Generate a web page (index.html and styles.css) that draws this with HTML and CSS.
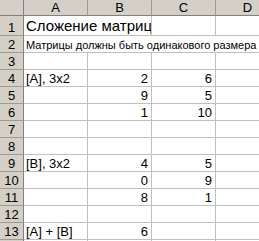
FILE: index.html
```html
<!DOCTYPE html>
<html lang="ru">
  <head>
    <meta charset="UTF-8" />
    <title>Сложение матриц</title>
    <link rel="stylesheet" href="styles.css">
  </head>
  <body>
    <div class="sheet">
      <!-- заголовки столбцов -->
      <div class="corner"></div>
      <div class="col-head">A</div>
      <div class="col-head">B</div>
      <div class="col-head">C</div>
      <div class="col-head">D</div>

      <div class="row-head">1</div>
      <div class="cell title span2">Сложение матриц</div>
      <div class="cell"></div>
      <div class="cell"></div>

      <div class="row-head">2</div>
      <div class="cell note span4">Матрицы должны быть одинакового размера</div>

      <div class="row-head">3</div>
      <div class="cell"></div><div class="cell"></div><div class="cell"></div><div class="cell"></div>

      <div class="row-head">4</div>
      <div class="cell">[A], 3x2</div><div class="cell num">2</div><div class="cell num">6</div><div class="cell"></div>

      <div class="row-head">5</div>
      <div class="cell"></div><div class="cell num">9</div><div class="cell num">5</div><div class="cell"></div>

      <div class="row-head">6</div>
      <div class="cell"></div><div class="cell num">1</div><div class="cell num">10</div><div class="cell"></div>

      <div class="row-head">7</div>
      <div class="cell"></div><div class="cell"></div><div class="cell"></div><div class="cell"></div>

      <div class="row-head">8</div>
      <div class="cell"></div><div class="cell"></div><div class="cell"></div><div class="cell"></div>

      <div class="row-head">9</div>
      <div class="cell">[B], 3x2</div><div class="cell num">4</div><div class="cell num">5</div><div class="cell"></div>

      <div class="row-head">10</div>
      <div class="cell"></div><div class="cell num">0</div><div class="cell num">9</div><div class="cell"></div>

      <div class="row-head">11</div>
      <div class="cell"></div><div class="cell num">8</div><div class="cell num">1</div><div class="cell"></div>

      <div class="row-head">12</div>
      <div class="cell"></div><div class="cell"></div><div class="cell"></div><div class="cell"></div>

      <div class="row-head">13</div>
      <div class="cell">[A] + [B]</div><div class="cell num">6</div><div class="cell"></div><div class="cell"></div>

      <!-- следующая строка видна только краем -->
      <div class="row-head"></div>
      <div class="cell"></div><div class="cell"></div><div class="cell"></div><div class="cell"></div>
    </div>
  </body>
</html>
```

FILE: styles.css
```css
body {
  margin: 0;
  background: #ffffff;
  font-family: "Liberation Sans", Arial, sans-serif;
}
.sheet {
  display: grid;
  grid-template-columns: 24px repeat(4, 64px);
  grid-template-rows: 16px 20px repeat(13, 17px);
  width: 259px;
  height: 241px;
  overflow: hidden;
}
.sheet > div {
  box-sizing: border-box;
  white-space: nowrap;
  overflow: hidden;
}
.corner,
.col-head,
.row-head {
  background: #d4d0c8;
  color: #000000;
  font-size: 13px;
  border-right: 1px solid #9c9a94;
  border-bottom: 1px solid #9c9a94;
}
.col-head {
  display: flex;
  align-items: center;
  justify-content: center;
  line-height: 15px;
  border-bottom-color: #808080;
}
.row-head {
  display: flex;
  align-items: flex-end;
  justify-content: center;
  line-height: 15px;
  border-right-color: #808080;
}
.corner {
  border-right-color: #808080;
  border-bottom-color: #808080;
}
.cell {
  display: flex;
  align-items: flex-end;
  padding: 0 3px 0 2px;
  font-size: 13px;
  line-height: 15px;
  border-right: 1px solid #c0c0c0;
  border-bottom: 1px solid #c0c0c0;
}
.num {
  justify-content: flex-end;
}
.span2 {
  grid-column: span 2;
}
.span4 {
  grid-column: span 4;
}
.title {
  font-size: 15px;
  line-height: 18px;
}
.note {
  font-size: 11px;
  line-height: 14px;
}
```
